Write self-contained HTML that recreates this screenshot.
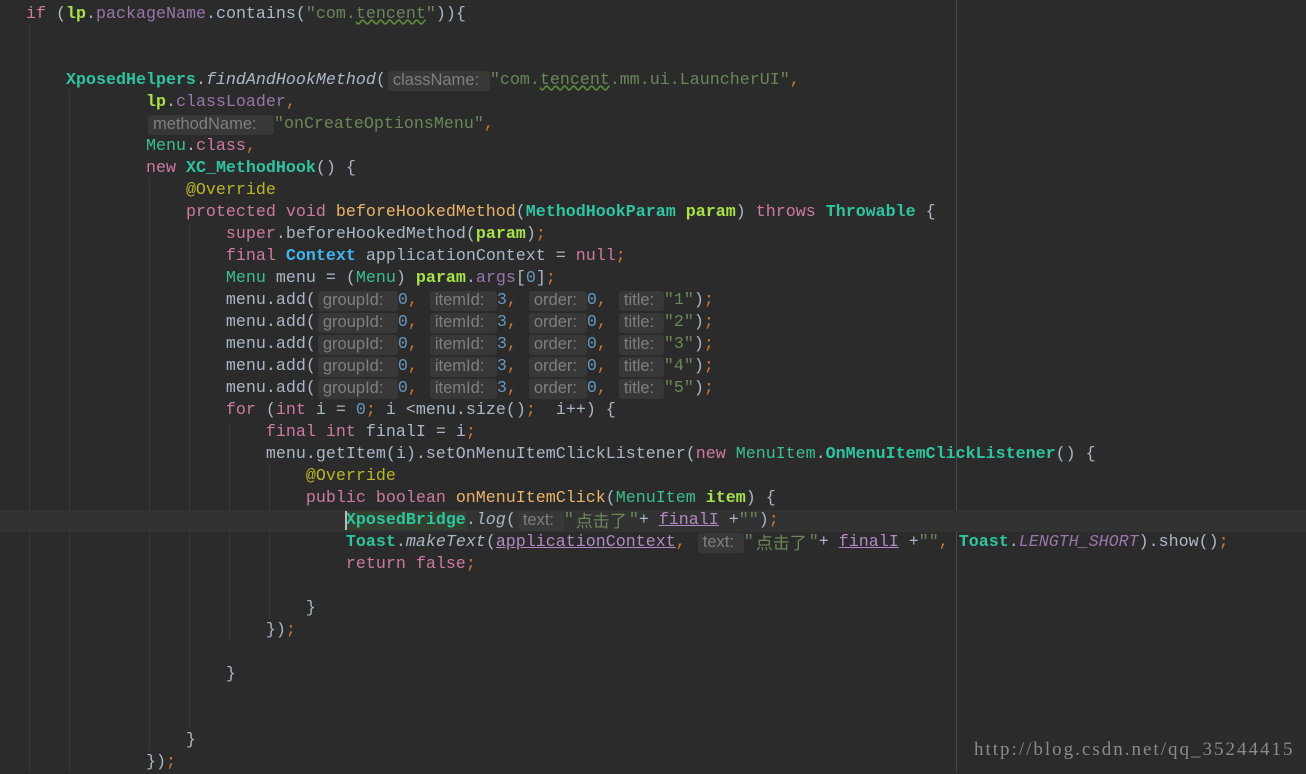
<!DOCTYPE html>
<html><head><meta charset="utf-8"><style>
body{margin:0;background:#2b2b2b;width:1306px;height:772px;overflow:hidden;position:relative;font-family:"Liberation Mono","Noto Sans CJK SC",monospace;font-size:16.67px;color:#a9b7c6}
.code{position:absolute;left:0;top:4px;width:1306px}
.l{height:22px;line-height:22px;white-space:pre;padding-left:26px;position:relative;overflow:hidden}
.hl{background:#323232}
.k{color:#cc7aa0}.s{color:#6a8759}.n{color:#6897bb}.c{color:#2fc4a0;font-weight:bold}.cm{color:#3cbf8e}
.o{color:#cc7832}.f{color:#9876aa}.p{color:#a6e24a;font-weight:bold}.m{color:#e8b46a}.a{color:#bbb529}
.i{font-style:italic}.fi{font-style:italic;color:#9876aa}.ctx{color:#3fb6f2;font-weight:bold}
.u{color:#b389c5;text-decoration:underline}
.h{display:inline-block;height:20px;line-height:18px;vertical-align:top;margin-top:1px;background:#383838;color:#7f7f7f;font-family:"Liberation Sans",sans-serif;font-size:16.5px;border-radius:3px;padding-left:5px;box-sizing:border-box;text-align:left;margin-left:2px;overflow:hidden}
.cj{display:inline-block;width:55px;height:22px;line-height:19px;vertical-align:top;font-family:"Noto Sans CJK SC",sans-serif;font-size:17px;color:#6a8759;text-align:center;overflow:hidden}
.wv{text-decoration:underline wavy #5a8a3a}
.g{position:absolute;width:1px;background:#393939}
.margin{position:absolute;left:956px;top:0;width:1px;height:772px;background:#4a4a4a}
.wm{position:absolute;left:974px;top:739px;font-family:"Liberation Serif",serif;font-size:19px;letter-spacing:2px;color:#8a8a8a}
.caret{position:absolute;left:345px;top:511px;width:2px;height:19px;background:#bbbbbb}
</style></head><body>
<div class="margin"></div>
<div class="g" style="left:29px;top:25px;height:747px"></div>
<div class="g" style="left:69px;top:91px;height:681px"></div>
<div class="g" style="left:149px;top:179px;height:570px"></div>
<div class="g" style="left:189px;top:223px;height:505px"></div>
<div class="g" style="left:229px;top:421px;height:220px"></div>
<div class="g" style="left:269px;top:465px;height:154px"></div>
<div class="code">
<div class="l"><span class="k">if</span> (<span class="p">lp</span>.<span class="f">packageName</span>.contains(<span class="s">"com.<span class="wv">tencent</span>"</span>)){</div>
<div class="l"> </div>
<div class="l"> </div>
<div class="l">    <span class="c">XposedHelpers</span>.<span class="i">findAndHookMethod</span>(<span class="h" style="width:102px">className:</span><span class="s">"com.<span class="wv">tencent</span>.mm.ui.LauncherUI"</span><span class="o">,</span></div>
<div class="l">            <span class="p">lp</span>.<span class="f">classLoader</span><span class="o">,</span></div>
<div class="l">            <span class="h" style="width:126px">methodName:</span><span class="s">"onCreateOptionsMenu"</span><span class="o">,</span></div>
<div class="l">            <span class="cm">Menu</span>.<span class="k">class</span><span class="o">,</span></div>
<div class="l">            <span class="k">new</span> <span class="c">XC_MethodHook</span>() {</div>
<div class="l">                <span class="a">@Override</span></div>
<div class="l">                <span class="k">protected void</span> <span class="m">beforeHookedMethod</span>(<span class="c">MethodHookParam</span> <span class="p">param</span>) <span class="k">throws</span> <span class="c">Throwable</span> {</div>
<div class="l">                    <span class="k">super</span>.beforeHookedMethod(<span class="p">param</span>)<span class="o">;</span></div>
<div class="l">                    <span class="k">final</span> <span class="ctx">Context</span> applicationContext = <span class="k">null</span><span class="o">;</span></div>
<div class="l">                    <span class="cm">Menu</span> menu = (<span class="cm">Menu</span>) <span class="p">param</span>.<span class="f">args</span>[<span class="n">0</span>]<span class="o">;</span></div>
<div class="l">                    menu.add(<span class="h" style="width:80px">groupId:</span><span class="n">0</span><span class="o">,</span> <span class="h" style="width:67px">itemId:</span><span class="n">3</span><span class="o">,</span> <span class="h" style="width:58px">order:</span><span class="n">0</span><span class="o">,</span> <span class="h" style="width:45px">title:</span><span class="s">"1"</span>)<span class="o">;</span></div>
<div class="l">                    menu.add(<span class="h" style="width:80px">groupId:</span><span class="n">0</span><span class="o">,</span> <span class="h" style="width:67px">itemId:</span><span class="n">3</span><span class="o">,</span> <span class="h" style="width:58px">order:</span><span class="n">0</span><span class="o">,</span> <span class="h" style="width:45px">title:</span><span class="s">"2"</span>)<span class="o">;</span></div>
<div class="l">                    menu.add(<span class="h" style="width:80px">groupId:</span><span class="n">0</span><span class="o">,</span> <span class="h" style="width:67px">itemId:</span><span class="n">3</span><span class="o">,</span> <span class="h" style="width:58px">order:</span><span class="n">0</span><span class="o">,</span> <span class="h" style="width:45px">title:</span><span class="s">"3"</span>)<span class="o">;</span></div>
<div class="l">                    menu.add(<span class="h" style="width:80px">groupId:</span><span class="n">0</span><span class="o">,</span> <span class="h" style="width:67px">itemId:</span><span class="n">3</span><span class="o">,</span> <span class="h" style="width:58px">order:</span><span class="n">0</span><span class="o">,</span> <span class="h" style="width:45px">title:</span><span class="s">"4"</span>)<span class="o">;</span></div>
<div class="l">                    menu.add(<span class="h" style="width:80px">groupId:</span><span class="n">0</span><span class="o">,</span> <span class="h" style="width:67px">itemId:</span><span class="n">3</span><span class="o">,</span> <span class="h" style="width:58px">order:</span><span class="n">0</span><span class="o">,</span> <span class="h" style="width:45px">title:</span><span class="s">"5"</span>)<span class="o">;</span></div>
<div class="l">                    <span class="k">for</span> (<span class="k">int</span> i = <span class="n">0</span><span class="o">;</span> i &lt;menu.size()<span class="o">;</span>  i++) {</div>
<div class="l">                        <span class="k">final int</span> finalI = i<span class="o">;</span></div>
<div class="l">                        menu.getItem(i).setOnMenuItemClickListener(<span class="k">new</span> <span class="cm">MenuItem</span>.<span class="c">OnMenuItemClickListener</span>() {</div>
<div class="l">                            <span class="a">@Override</span></div>
<div class="l">                            <span class="k">public boolean</span> <span class="m">onMenuItemClick</span>(<span class="cm">MenuItem</span> <span class="p">item</span>) {</div>
<div class="l hl">                                <span class="c" style="background:#33402f">XposedBridge</span>.<span class="i">log</span>(<span class="h" style="width:46px">text:</span><span class="s">"</span><span class="cj">点击了</span><span class="s">"</span>+ <span class="u">finalI</span> +<span class="s">""</span>)<span class="o">;</span></div>
<div class="l">                                <span class="c">Toast</span>.<span class="i">makeText</span>(<span class="u">applicationContext</span><span class="o">,</span> <span class="h" style="width:46px">text:</span><span class="s">"</span><span class="cj">点击了</span><span class="s">"</span>+ <span class="u">finalI</span> +<span class="s">""</span><span class="o">,</span> <span class="c">Toast</span>.<span class="fi">LENGTH_SHORT</span>).show()<span class="o">;</span></div>
<div class="l">                                <span class="k">return false</span><span class="o">;</span></div>
<div class="l"> </div>
<div class="l">                            }</div>
<div class="l">                        })<span class="o">;</span></div>
<div class="l"> </div>
<div class="l">                    }</div>
<div class="l"> </div>
<div class="l"> </div>
<div class="l">                }</div>
<div class="l">            })<span class="o">;</span></div>
</div>
<div class="caret"></div>
<div class="wm">http://blog.csdn.net/qq_35244415</div>
</body></html>
